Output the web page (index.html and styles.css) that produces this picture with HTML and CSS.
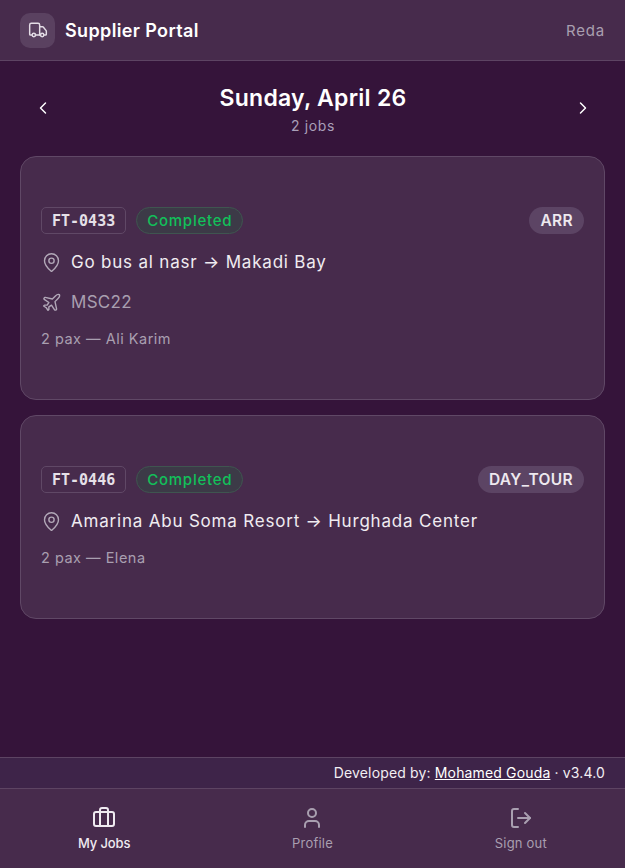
FILE: index.html
```html
<!DOCTYPE html>
<html lang="en">
<head>
    <meta charset="UTF-8">
    <meta name="viewport" content="width=device-width, initial-scale=1.0">
    <title>Supplier Portal</title>
    <link rel="stylesheet" href="styles.css">
</head>
<body>
    <div class="app">
        <!-- Top bar -->
        <header class="topbar">
            <div class="brand">
                <span class="brand-icon">
                    <svg class="icon" viewBox="0 0 24 24"><path d="M14 18V6a2 2 0 0 0-2-2H4a2 2 0 0 0-2 2v11a1 1 0 0 0 1 1h2"/><path d="M15 18H9"/><path d="M19 18h2a1 1 0 0 0 1-1v-3.65a1 1 0 0 0-.22-.624l-3.48-4.35A1 1 0 0 0 17.52 8H14"/><circle cx="17" cy="18" r="2"/><circle cx="7" cy="18" r="2"/></svg>
                </span>
                <span class="brand-name">Supplier Portal</span>
            </div>
            <span class="user-name">Reda</span>
        </header>

        <main class="content">
            <!-- Date navigation -->
            <div class="date-nav">
                <button class="nav-arrow"><svg class="icon" viewBox="0 0 24 24"><path d="m15 18-6-6 6-6"/></svg></button>
                <div class="date-info">
                    <h1>Sunday, April 26</h1>
                    <p>2 jobs</p>
                </div>
                <button class="nav-arrow"><svg class="icon" viewBox="0 0 24 24"><path d="m9 18 6-6-6-6"/></svg></button>
            </div>

            <!-- Job cards -->
            <section class="job-card">
                <div class="job-head">
                    <span class="job-code">FT-0433</span>
                    <span class="job-status">Completed</span>
                    <span class="job-type">ARR</span>
                </div>
                <div class="job-line job-route">
                    <svg class="icon icon-md" viewBox="0 0 24 24"><path d="M20 10c0 4.993-5.539 10.193-7.399 11.799a1 1 0 0 1-1.202 0C9.539 20.193 4 14.993 4 10a8 8 0 0 1 16 0"/><circle cx="12" cy="10" r="3"/></svg>
                    <span>Go bus al nasr → Makadi Bay</span>
                </div>
                <div class="job-line job-flight">
                    <svg class="icon icon-md" viewBox="0 0 24 24"><path d="M17.8 19.2 16 11l3.5-3.5C21 6 21.5 4 21 3c-1-.5-3 0-4.5 1.5L13 8 4.8 6.2c-.5-.1-.9.1-1.1.5l-.3.5c-.2.5-.1 1 .3 1.3L9 12l-2 3H4l-1 1 3 2 2 3 1-1v-3l3-2 3.5 5.3c.3.4.8.5 1.3.3l.5-.2c.4-.3.6-.7.5-1.2z"/></svg>
                    <span>MSC22</span>
                </div>
                <p class="job-pax">2 pax — Ali Karim</p>
            </section>

            <section class="job-card">
                <div class="job-head">
                    <span class="job-code">FT-0446</span>
                    <span class="job-status">Completed</span>
                    <span class="job-type">DAY_TOUR</span>
                </div>
                <div class="job-line job-route">
                    <svg class="icon icon-md" viewBox="0 0 24 24"><path d="M20 10c0 4.993-5.539 10.193-7.399 11.799a1 1 0 0 1-1.202 0C9.539 20.193 4 14.993 4 10a8 8 0 0 1 16 0"/><circle cx="12" cy="10" r="3"/></svg>
                    <span>Amarina Abu Soma Resort → Hurghada Center</span>
                </div>
                <p class="job-pax">2 pax — Elena</p>
            </section>
        </main>

        <div class="credit">Developed by: <a href="#">Mohamed Gouda</a> · v3.4.0</div>

        <!-- Bottom tabs -->
        <nav class="tabs">
            <a class="tab active" href="#">
                <svg class="icon icon-lg" viewBox="0 0 24 24"><path d="M16 20V4a2 2 0 0 0-2-2h-4a2 2 0 0 0-2 2v16"/><rect x="2" y="6" width="20" height="14" rx="2"/></svg>
                <span>My Jobs</span>
            </a>
            <a class="tab" href="#">
                <svg class="icon icon-lg" viewBox="0 0 24 24"><path d="M19 21v-2a4 4 0 0 0-4-4H9a4 4 0 0 0-4 4v2"/><circle cx="12" cy="7" r="4"/></svg>
                <span>Profile</span>
            </a>
            <a class="tab" href="#">
                <svg class="icon icon-lg" viewBox="0 0 24 24"><path d="M9 21H5a2 2 0 0 1-2-2V5a2 2 0 0 1 2-2h4"/><path d="m16 17 5-5-5-5"/><path d="M21 12H9"/></svg>
                <span>Sign out</span>
            </a>
        </nav>
    </div>
</body>
</html>
```

FILE: styles.css
```css
* {
    box-sizing: border-box;
}

body {
    font-family: Inter, "Liberation Sans", sans-serif;
    margin: 0;
    padding: 0;
    background-color: #35143a;
    color: #fff;
}

.app {
    display: flex;
    flex-direction: column;
    height: 100vh;
}

.icon {
    width: 20px;
    height: 20px;
    fill: none;
    stroke: currentColor;
    stroke-width: 1.75;
    stroke-linecap: round;
    stroke-linejoin: round;
    flex-shrink: 0;
}

.icon-md {
    width: 21px;
    height: 21px;
    stroke-width: 1.6;
}

.icon-lg {
    width: 24px;
    height: 24px;
    stroke-width: 2;
}

.topbar {
    display: flex;
    justify-content: space-between;
    align-items: center;
    height: 61px;
    padding: 0 20px;
    background: #472b4c;
    border-bottom: 1px solid #5d4463;
}

.brand {
    display: flex;
    align-items: center;
    gap: 10px;
}

.brand-icon {
    display: flex;
    justify-content: center;
    align-items: center;
    width: 35px;
    height: 35px;
    border-radius: 10px;
    background: #5a4160;
    color: #e4dde6;
}

.brand-name {
    font-size: 18px;
    font-weight: 600;
    letter-spacing: 0.37px;
}

.user-name {
    font-size: 15px;
    color: #a99fb0;
    letter-spacing: 0.8px;
}

.content {
    flex: 1;
    display: flex;
    flex-direction: column;
    gap: 15px;
    padding: 14px 20px 0;
}

.date-nav {
    display: flex;
    justify-content: space-between;
    align-items: center;
    height: 66px;
    padding: 0 12px 0 13px;
}

.nav-arrow {
    display: flex;
    background: none;
    border: none;
    padding: 0;
    color: #fff;
    cursor: pointer;
}

.date-info {
    padding-top: 2px;
}

.date-info h1,
.date-info p {
    margin: 0;
    text-align: center;
}

.date-info h1 {
    font-size: 23px;
    font-weight: 600;
    line-height: 30px;
    letter-spacing: 0.25px;
}

.date-info p {
    font-size: 14px;
    line-height: 20px;
    margin-top: 3px;
    color: #a99fb8;
    letter-spacing: 0.6px;
}

.job-card {
    display: flex;
    flex-direction: column;
    padding: 50px 20px;
    background: #472b4c;
    border: 1px solid #604866;
    border-radius: 16px;
}

.job-head {
    display: flex;
    align-items: center;
    gap: 10px;
    height: 27px;
}

.job-code {
    display: flex;
    align-items: center;
    height: 27px;
    padding: 0 10px;
    font-family: "DejaVu Sans Mono", "Liberation Mono", monospace;
    font-size: 15px;
    font-weight: 600;
    color: #e6e0e8;
    border: 1px solid #604866;
    border-radius: 5px;
}

.job-status {
    display: flex;
    align-items: center;
    height: 27px;
    padding: 0 10px;
    font-size: 15px;
    font-weight: 500;
    letter-spacing: 0.75px;
    color: #12c05a;
    background: #3c3a47;
    border: 1px solid #3f5550;
    border-radius: 14px;
}

.job-type {
    display: flex;
    align-items: center;
    height: 27px;
    padding: 0 11px;
    margin-left: auto;
    font-size: 15.5px;
    font-weight: 600;
    letter-spacing: 0.35px;
    color: #eee9ef;
    background: #5c4464;
    border-radius: 14px;
}

.job-line {
    display: flex;
    align-items: center;
    gap: 9px;
    height: 20px;
}

.job-line .icon {
    color: #b2a8b8;
}

.job-route {
    margin-top: 18px;
    font-size: 17px;
    color: #f0ecf1;
    letter-spacing: 0.8px;
}

.job-flight {
    margin-top: 20px;
    font-size: 17px;
    color: #a99fb0;
    letter-spacing: 0.3px;
}

.job-pax {
    margin: 17px 0 0;
    font-size: 14.5px;
    line-height: 20px;
    color: #a99fb0;
    letter-spacing: 0.5px;
}

.credit {
    height: 31px;
    padding: 0 20px;
    font-size: 14px;
    line-height: 30px;
    letter-spacing: 0.15px;
    text-align: right;
    color: #f2eef3;
    background: #3e2449;
    border-top: 1px solid #5d4463;
}

.credit a {
    color: #fff;
}

.tabs {
    display: grid;
    grid-template-columns: repeat(3, 1fr);
    height: 80px;
    padding-top: 17px;
    background: #472b4c;
    border-top: 1px solid #5d4463;
}

.tab {
    display: flex;
    flex-direction: column;
    align-items: center;
    gap: 5px;
    font-size: 13px;
    letter-spacing: 0.2px;
    text-decoration: none;
    color: #a99fb0;
}

.tab.active {
    font-weight: 500;
    letter-spacing: -0.1px;
    color: #efeaf0;
}
```
